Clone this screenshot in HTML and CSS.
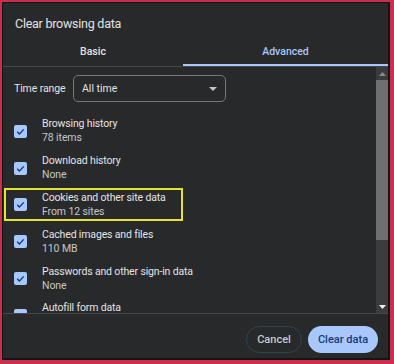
FILE: index.html
```html
<!DOCTYPE html>
<html lang="en">
<head>
  <meta charset="UTF-8">
  <title>Clear browsing data</title>
  <link rel="stylesheet" href="styles.css">
</head>
<body>

<div class="frame">
  <div class="dialog">
    <div class="header">Clear browsing data</div>

    <div class="tabs">
      <div class="tab">Basic</div>
      <div class="tab active">Advanced</div>
    </div>

    <div class="content">
      <div class="list">
        <div class="time-range">
          <span class="label">Time range</span>
          <div class="select">
            <span>All time</span>
            <svg class="arrow" width="8" height="4" viewBox="0 0 8 4"><path d="M0 0h8L4 4z" fill="#c4c7c5"/></svg>
          </div>
        </div>

        <div class="item">
          <div class="check"><svg width="13" height="13" viewBox="0 0 13 13"><path d="M3.2 6.8l2.2 2.2 4.4-4.6" stroke="#0b3a82" stroke-width="1.3" fill="none"/></svg></div>
          <div class="text">
            <div class="title">Browsing history</div>
            <div class="sub">78 items</div>
          </div>
        </div>

        <div class="item">
          <div class="check"><svg width="13" height="13" viewBox="0 0 13 13"><path d="M3.2 6.8l2.2 2.2 4.4-4.6" stroke="#0b3a82" stroke-width="1.3" fill="none"/></svg></div>
          <div class="text">
            <div class="title">Download history</div>
            <div class="sub">None</div>
          </div>
        </div>

        <div class="item">
          <span class="highlight"></span>
          <div class="check"><svg width="13" height="13" viewBox="0 0 13 13"><path d="M3.2 6.8l2.2 2.2 4.4-4.6" stroke="#0b3a82" stroke-width="1.3" fill="none"/></svg></div>
          <div class="text">
            <div class="title">Cookies and other site data</div>
            <div class="sub">From 12 sites</div>
          </div>
        </div>

        <div class="item">
          <div class="check"><svg width="13" height="13" viewBox="0 0 13 13"><path d="M3.2 6.8l2.2 2.2 4.4-4.6" stroke="#0b3a82" stroke-width="1.3" fill="none"/></svg></div>
          <div class="text">
            <div class="title">Cached images and files</div>
            <div class="sub">110 MB</div>
          </div>
        </div>

        <div class="item">
          <div class="check"><svg width="13" height="13" viewBox="0 0 13 13"><path d="M3.2 6.8l2.2 2.2 4.4-4.6" stroke="#0b3a82" stroke-width="1.3" fill="none"/></svg></div>
          <div class="text">
            <div class="title">Passwords and other sign-in data</div>
            <div class="sub">None</div>
          </div>
        </div>

        <div class="item last">
          <div class="check"><svg width="13" height="13" viewBox="0 0 13 13"><path d="M3.2 6.8l2.2 2.2 4.4-4.6" stroke="#0b3a82" stroke-width="1.3" fill="none"/></svg></div>
          <div class="text">
            <div class="title">Autofill form data</div>
          </div>
        </div>
      </div>

      <div class="scrollbar">
        <div class="scroll-btn"><svg width="7" height="4" viewBox="0 0 7 4"><path d="M0 4h7L3.5 0z" fill="#8a8b8d"/></svg></div>
        <div class="thumb"></div>
        <div class="track"></div>
        <div class="scroll-btn"><svg width="7" height="4" viewBox="0 0 7 4"><path d="M0 0h7L3.5 4z" fill="#f0f0f0"/></svg></div>
      </div>
    </div>

    <div class="footer">
      <button class="btn cancel">Cancel</button>
      <button class="btn primary">Clear data</button>
    </div>
  </div>
</div>

</body>
</html>
```

FILE: styles.css
```css
body {
  margin: 0;
  font-family: 'Segoe UI', Roboto, 'Liberation Sans', sans-serif;
  background: #c8304d;
}

.frame {
  width: 394px;
  height: 364px;
  box-sizing: border-box;
  border-style: solid;
  border-color: #c8304d;
  border-width: 2px 4px 4px 2px;
}

.dialog {
  height: 100%;
  box-sizing: border-box;
  background: #28292b;
  border-style: solid;
  border-color: #141516;
  border-width: 1px 2px 2px 1px;
  display: flex;
  flex-direction: column;
  color: #e3e3e3;
}

.header {
  font-size: 12.5px;
  letter-spacing: -0.25px;
  line-height: 16px;
  padding: 13px 12px 6px;
}

.tabs {
  display: grid;
  grid-template-columns: 180px 1fr;
  border-bottom: 1px solid #45474a;
}

.tab {
  text-align: center;
  font-size: 10.5px;
  font-weight: 500;
  line-height: 14px;
  padding: 7px 0;
}

.tab.active {
  color: #a8c7fa;
  box-shadow: inset 0 -2px 0 #a8c7fa;
}

.content {
  display: flex;
  height: 246px;
}

.list {
  flex: 1;
  overflow: hidden;
  padding-left: 11px;
}

.time-range {
  display: flex;
  align-items: center;
  margin: 8px 0 11px;
}

.time-range .label {
  font-size: 10.5px;
  letter-spacing: -0.1px;
  width: 59px;
}

.select {
  width: 153px;
  height: 27px;
  box-sizing: border-box;
  border: 1px solid #75777a;
  border-radius: 5px;
  display: flex;
  align-items: center;
  justify-content: space-between;
  padding: 0 8px 0 8px;
  font-size: 10.5px;
}

.item {
  position: relative;
  display: flex;
  align-items: center;
  gap: 15px;
  padding: 4.4px 0;
}

.item.last .text {
  min-height: 28px;
}

.check {
  width: 13px;
  height: 13px;
  background: #a8c7fa;
  border-radius: 2px;
  flex-shrink: 0;
}

.check svg {
  display: block;
}

.title {
  font-size: 10.5px;
  letter-spacing: -0.15px;
  line-height: 14px;
}

.sub {
  font-size: 10.5px;
  letter-spacing: -0.1px;
  line-height: 14px;
  color: #c4c7c5;
}

.highlight {
  position: absolute;
  left: -10px;
  top: 1px;
  width: 179px;
  height: 33px;
  box-sizing: border-box;
  border: 2px solid #e4e42a;
}

.scrollbar {
  width: 12px;
  display: flex;
  flex-direction: column;
  background: #3b3c3e;
}

.scroll-btn {
  height: 13px;
  display: flex;
  align-items: center;
  justify-content: center;
}

.thumb {
  height: 160px;
  background: #6e6f71;
}

.track {
  flex: 1;
}

.footer {
  border-top: 1px solid #45474a;
  display: flex;
  justify-content: flex-end;
  gap: 6px;
  padding: 12px 10px 0;
}

.btn {
  height: 27px;
  border-radius: 14px;
  font-family: inherit;
  font-size: 11px;
  font-weight: 500;
  cursor: pointer;
}

.btn.cancel {
  width: 56px;
  background: transparent;
  border: 1px solid #2e4450;
  color: #c7c9cc;
}

.btn.primary {
  width: 70px;
  background: #a8c7fa;
  border: none;
  color: #163a78;
}
```
